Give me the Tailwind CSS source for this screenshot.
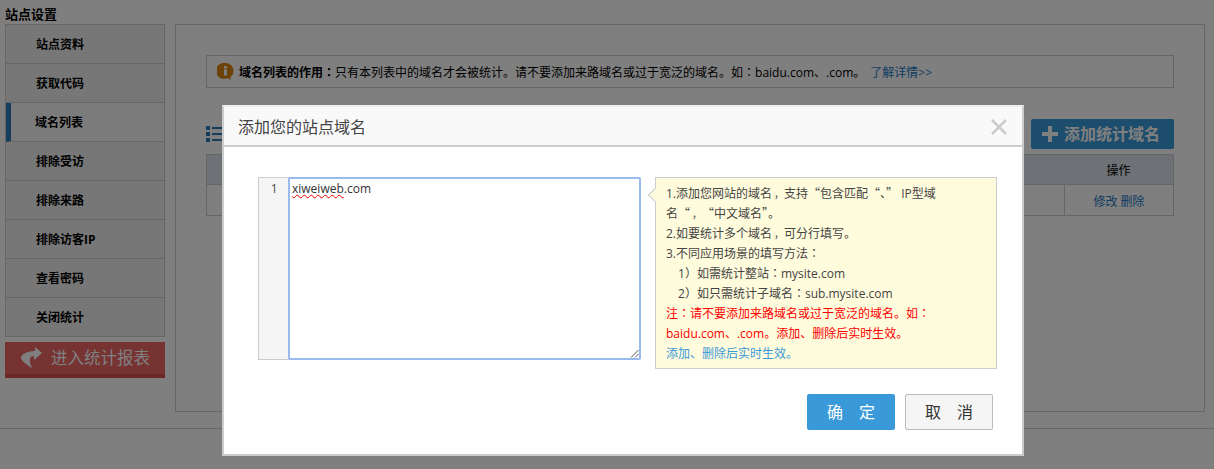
<!DOCTYPE html>
<html lang="zh-CN">
  <head>
    <meta charset="UTF-8" />
    <title>站点设置</title>
    <script src="https://cdn.jsdelivr.net/npm/@tailwindcss/browser@4"></script>
  </head>
  <body class="bg-white font-['Open_Sans','Noto_Sans_CJK_SC',sans-serif] text-[13px] text-[#333] h-[469px] overflow-hidden">
    <!-- Page under the mask -->
    <div class="h-[429px] border-b border-[#ccc] px-[5px] pt-[5px]">
      <h2 class="h-[19px] leading-[18px] text-[13px] font-bold text-black">站点设置</h2>
      <div class="flex gap-[10px]">
        <!-- Sidebar -->
        <div class="w-[160px] shrink-0">
          <ul class="border border-[#ccc] bg-[#eee] font-bold text-[12px] text-black">
            <li class="h-[39px] leading-[40px] pl-[30px] border-b border-[#ccc]">站点资料</li>
            <li class="h-[39px] leading-[40px] pl-[30px] border-b border-[#ccc]">获取代码</li>
            <li class="h-[39px] leading-[40px] pl-[24px] border-b border-[#ccc] border-l-[5px] border-l-[#2a7ab8] bg-[#f7f7f7]">域名列表</li>
            <li class="h-[39px] leading-[40px] pl-[30px] border-b border-[#ccc]">排除受访</li>
            <li class="h-[39px] leading-[40px] pl-[30px] border-b border-[#ccc]">排除来路</li>
            <li class="h-[39px] leading-[40px] pl-[30px] border-b border-[#ccc]">排除访客IP</li>
            <li class="h-[39px] leading-[40px] pl-[30px] border-b border-[#ccc]">查看密码</li>
            <li class="h-[38px] leading-[40px] pl-[30px]">关闭统计</li>
          </ul>
          <a class="mt-[5px] flex items-center h-[36px] bg-[#ee6464] border-b-[4px] border-b-[#d65050] text-white text-[16.500px] pl-[15px]">
            <svg class="w-[24px] h-[24px] mr-[7px]" viewBox="0 0 24 24" fill="#fff"><path d="M15 1l7 6-8 7v-4c-4 0-6 3-2 12C5 18 1 14 1 12c0-4 7-7 14-7z"/></svg>
            <span>进入统计报表</span>
          </a>
        </div>
        <!-- Main panel -->
        <div class="w-[1030px] h-[388px] border border-[#ccc] bg-white pt-[30px] pl-[30px]">
          <div class="w-[968px] h-[33px] border border-[#ccc] bg-white flex items-center pl-[10px] text-[12px] text-black">
            <svg class="w-[17px] h-[17px] mr-[4px]" viewBox="0 0 17 17"><path d="M8.500 0a8 8 0 0 1 8 8c0 3-1.500 5-3 6v3l-3-2a8 8 0 1 1-2-15z" fill="#d8840e"/><rect x="7" y="3" width="3" height="2.500" fill="#fff"/><rect x="7" y="6.500" width="3" height="6" fill="#fff"/></svg>
            <p class="pt-[2px] ml-[1px]"><b>域名列表的作用<span lang="zh-TW" class="font-['Noto_Sans_CJK_TC'] leading-none">：</span></b>只有本列表中的域名才会被统计。请不要添加来路域名或过于宽泛的域名。如<span lang="zh-TW" class="font-['Noto_Sans_CJK_TC'] leading-none">：</span>baidu.com、.com。<a class="text-[#1a7ac4] ml-[5px]">了解详情&gt;&gt;</a></p>
          </div>
          <div class="w-[968px] flex justify-between items-end h-[61px]">
            <svg class="w-[18px] h-[16px] mb-[7px]" viewBox="0 0 18 16" fill="#2a7ab8"><rect x="0" y="0" width="4" height="4"/><rect x="0" y="6" width="4" height="4"/><rect x="0" y="12" width="4" height="4"/><rect x="6" y="1" width="12" height="2"/><rect x="6" y="7" width="12" height="2"/><rect x="6" y="13" width="12" height="2"/></svg>
            <a class="w-[143px] h-[30px] rounded-[2px] bg-[#3a9ad9] text-white font-bold text-[16px] flex items-center pl-[10px]">
              <svg class="w-[18px] h-[18px] mr-[5px]" viewBox="0 0 18 18" fill="#fff"><path d="M7 1h4v6h6v4h-6v6H7v-6H1V7h6z"/></svg>
              <span>添加统计域名</span>
            </a>
          </div>
          <div class="w-[968px] mt-[5px] border border-[#ccc] text-[12px] text-black">
            <div class="h-[30px] bg-[#dde5ee] border-b border-[#ccc] flex">
              <div class="flex-1"></div>
              <div class="w-[109px] leading-[32px] text-center">操作</div>
            </div>
            <div class="h-[30px] flex bg-white">
              <div class="flex-1"></div>
              <div class="w-[109px] leading-[33px] text-center border-l border-[#ccc] text-[#1a7ac4]">修改 删除</div>
            </div>
          </div>
        </div>
      </div>
    </div>

    <!-- Mask -->
    <div class="fixed inset-0 bg-black/50"></div>

    <!-- Dialog -->
    <div class="fixed left-[222px] top-[105px] w-[802px] h-[351px] border-2 border-[#ccc] border-t-[#eee] bg-white">
      <div class="h-[40px] bg-[#f9f9f9] border-b-2 border-[#ccc] relative pl-[14px] leading-[41px] text-[16px] text-[#444]">
        添加您的站点域名
        <svg class="absolute right-[15px] top-[12px] w-[16px] h-[16px]" viewBox="0 0 16 16" stroke="#ccc" stroke-width="2.500"><path d="M1 1l14 14M15 1L1 15"/></svg>
      </div>
      <div class="flex pl-[34px] pt-[30px]">
        <div class="flex h-[183px] w-[383px] shrink-0 self-start">
          <div class="w-[31px] shrink-0 bg-[#f5f5f5] border border-r-0 border-[#ccc] text-right pr-[11px] leading-[20px] text-[#555] text-[13px]">1</div>
          <div class="flex-1 -ml-px border-2 border-[#99bbee] rounded-[2px] pl-[2px] leading-[20px] text-[12px] text-[#333] relative">
            <span class="underline decoration-wavy decoration-[#e00] decoration-1">xiweiweb</span>.com
            <svg class="absolute right-0 bottom-0 w-[9px] h-[9px]" viewBox="0 0 9 9" stroke="#555"><path d="M8.500 1L1 8.500M8.500 5L5 8.500"/></svg>
          </div>
        </div>
        <div class="ml-[14px] relative w-[342px] h-[192px] border border-[#ccc] bg-[#fffbdd] pl-[10px] pt-[5px] pr-[50px] leading-[20px] text-[12px] text-[#444]">
          <span class="absolute left-[-6px] top-[12px] w-[10px] h-[10px] rotate-45 bg-[#fffbdd] border-l border-b border-[#ccc]"></span>
          <p class="pt-[1px]">1.添加您网站的域名<span class="inline-block w-[12px] pl-[2px] text-[10px] leading-none">，</span>支持<span class="font-['Noto_Sans_CJK_SC'] leading-none">“</span>包含匹配<span class="font-['Noto_Sans_CJK_SC'] leading-none">“、”</span> IP型域<br />名<span class="font-['Noto_Sans_CJK_SC'] leading-none">“</span><span class="inline-block w-[12px] pl-[2px] text-[10px] leading-none">，</span><span class="font-['Noto_Sans_CJK_SC'] leading-none">“</span>中文域名<span class="font-['Noto_Sans_CJK_SC'] leading-none">”</span>。</p>
          <p>2.如要统计多个域名<span class="inline-block w-[12px] pl-[2px] text-[10px] leading-none">，</span>可分行填写。</p>
          <p>3.不同应用场景的填写方法<span lang="zh-TW" class="font-['Noto_Sans_CJK_TC'] leading-none">：</span></p>
          <p class="pl-[12px]">1<span lang="zh-TW" class="font-['Noto_Sans_CJK_TC'] leading-none">）</span>如需统计整站<span lang="zh-TW" class="font-['Noto_Sans_CJK_TC'] leading-none">：</span>mysite.com</p>
          <p class="pl-[12px]">2<span lang="zh-TW" class="font-['Noto_Sans_CJK_TC'] leading-none">）</span>如只需统计子域名<span lang="zh-TW" class="font-['Noto_Sans_CJK_TC'] leading-none">：</span>sub.mysite.com</p>
          <p class="text-[#f00]">注<span lang="zh-TW" class="font-['Noto_Sans_CJK_TC'] leading-none">：</span>请不要添加来路域名或过于宽泛的域名。如<span lang="zh-TW" class="font-['Noto_Sans_CJK_TC'] leading-none">：</span><br />baidu.com、.com。添加、删除后实时生效。</p>
          <p class="text-[#3a9ad9]">添加、删除后实时生效。</p>
        </div>
      </div>
      <div class="flex justify-end gap-[10px] pr-[29px] pt-[25px]">
        <button class="w-[88px] h-[36px] rounded-[2px] bg-[#3a9ad9] text-white text-[16px] whitespace-pre">确&#12288;定</button>
        <button class="w-[88px] h-[36px] rounded-[2px] bg-[#f5f5f5] border border-[#bbb] text-[#333] text-[16px] whitespace-pre">取&#12288;消</button>
      </div>
    </div>
  </body>
</html>
